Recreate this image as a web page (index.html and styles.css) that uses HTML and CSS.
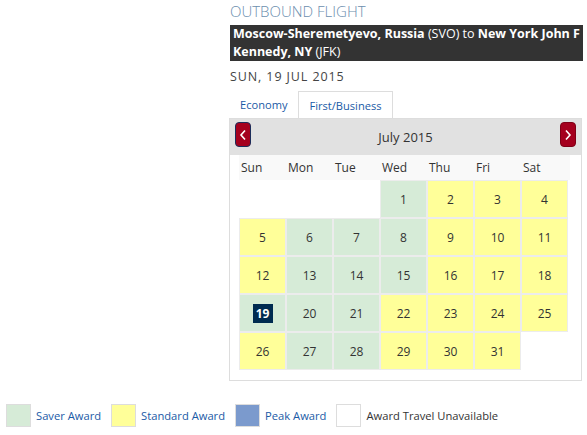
FILE: index.html
```html
<!DOCTYPE html>
<html>
<head>
<meta charset="utf-8">
<link rel="stylesheet" href="styles.css">
</head>
<body>
<div class="flight">
  <h1 class="title">OUTBOUND FLIGHT</h1>
  <div class="route"><b>Moscow-Sheremetyevo, Russia</b> (SVO) to <b>New York John F Kennedy, NY</b> (JFK)</div>
  <div class="date">SUN, 19 JUL 2015</div>
  <div class="tabs"><span class="tab">Economy</span><span class="tab active">First/Business</span></div>
  <div class="cal">
    <div class="cal-head">
      <button class="nav prev"><svg width="8" height="12" viewBox="0 0 8 12"><polyline points="6,1.5 2,6 6,10.5" fill="none" stroke="#fff" stroke-width="1.6"/></svg></button>
      <span class="month">July 2015</span>
      <button class="nav next"><svg width="8" height="12" viewBox="0 0 8 12"><polyline points="2,1.5 6,6 2,10.5" fill="none" stroke="#fff" stroke-width="1.6"/></svg></button>
    </div>
    <div class="cal-body">
      <div class="dow"><span>Sun</span><span>Mon</span><span>Tue</span><span>Wed</span><span>Thu</span><span>Fri</span><span>Sat</span></div>
      <div class="grid">
        <div class="day empty"></div><div class="day empty"></div><div class="day empty"></div>
        <div class="day saver">1</div><div class="day std">2</div><div class="day std">3</div><div class="day std">4</div>
        <div class="day std">5</div><div class="day saver">6</div><div class="day saver">7</div><div class="day saver">8</div><div class="day std">9</div><div class="day std">10</div><div class="day std">11</div>
        <div class="day std">12</div><div class="day saver">13</div><div class="day saver">14</div><div class="day saver">15</div><div class="day std">16</div><div class="day std">17</div><div class="day std">18</div>
        <div class="day saver"><span class="sel">19</span></div><div class="day saver">20</div><div class="day saver">21</div><div class="day std">22</div><div class="day std">23</div><div class="day std">24</div><div class="day std">25</div>
        <div class="day std">26</div><div class="day saver">27</div><div class="day saver">28</div><div class="day std">29</div><div class="day std">30</div><div class="day std">31</div><div class="day empty"></div>
      </div>
    </div>
  </div>
</div>
<div class="legend">
  <div class="item"><span class="sw saver"></span><span class="lbl">Saver Award</span></div>
  <div class="item"><span class="sw std"></span><span class="lbl">Standard Award</span></div>
  <div class="item"><span class="sw peak"></span><span class="lbl">Peak Award</span></div>
  <div class="item"><span class="sw none"></span><span class="lbl dark">Award Travel Unavailable</span></div>
</div>
</body>
</html>
```
FILE: styles.css
```css
* { box-sizing: border-box; }
body {
  margin: 0;
  background: #fff;
  font-family: "Open Sans", "Liberation Sans", sans-serif;
  color: #333;
}
.flight {
  margin-left: 229px;
  width: 354px;
}
.title {
  margin: 0;
  padding-left: 1px;
  font-size: 15px;
  line-height: 22px;
  font-weight: 300;
  color: #6b8eae;
  height: 25px;
}
.route {
  background: #333;
  color: #fff;
  font-size: 12.5px;
  line-height: 18px;
  padding: 0 3px;
  margin-left: 1px;
}
.route b { font-weight: 700; }
.date {
  font-size: 12.5px;
  letter-spacing: 0.9px;
  line-height: 16px;
  margin-top: 8px;
  padding-left: 1px;
  color: #444;
}
.tabs {
  display: flex;
  margin-top: 6px;
  height: 27px;
}
.tab {
  padding: 0 10px;
  font-size: 11.1px;
  line-height: 25px;
  color: #1a5aa6;
  border: 1px solid transparent;
  border-bottom: none;
}
.tab.active {
  border-color: #ddd;
  background: #fff;
  line-height: 27px;
}
.cal {
  width: 353px;
  border: 1px solid #ddd;
}
.cal-head {
  background: #e1e1e1;
  height: 36px;
  display: flex;
  align-items: flex-start;
  justify-content: space-between;
  padding: 3px 5px 0 5px;
}
.nav {
  width: 16px;
  height: 25px;
  padding: 0;
  border-radius: 4px;
  background: #a5001e;
  border: 1px solid #7e0016;
  display: flex;
  align-items: center;
  justify-content: center;
}
.nav.prev { border-color: #1d2d5a; }
.month {
  font-size: 13px;
  line-height: 36px;
  margin-top: -3px;
  color: #333;
}
.cal-body {
  padding: 0 0 10px 9px;
}
.dow {
  display: grid;
  grid-template-columns: repeat(7, 47px);
  width: 331px;
  height: 25px;
  background: #f9f9f9;
  font-size: 12px;
  line-height: 25px;
}
.dow span { padding-left: 2px; }
.grid {
  display: grid;
  grid-template-columns: repeat(7, 47px);
  grid-auto-rows: 38px;
}
.day {
  border: 1px solid #ececec;
  display: flex;
  align-items: center;
  justify-content: center;
  font-size: 12px;
  color: #333;
}
.day.empty { border-color: transparent; }
.saver { background: #d6ebd7; }
.std { background: #ffff99; }
.peak { background: #7b9acd; }
.sel {
  background: #002b50;
  color: #fff;
  font-weight: 700;
  width: 20px;
  height: 19px;
  line-height: 19px;
  text-align: center;
}
.legend {
  display: flex;
  align-items: center;
  margin-top: 23px;
  padding-left: 6px;
}
.item {
  display: flex;
  align-items: center;
  margin-right: 10px;
}
.sw {
  width: 25px;
  height: 23px;
  border: 1px solid #ddd;
  margin-right: 5px;
}
.sw.none { background: #fff; }
.lbl {
  font-size: 11.2px;
  color: #1a5aa6;
}
.lbl.dark { color: #333; }
```
